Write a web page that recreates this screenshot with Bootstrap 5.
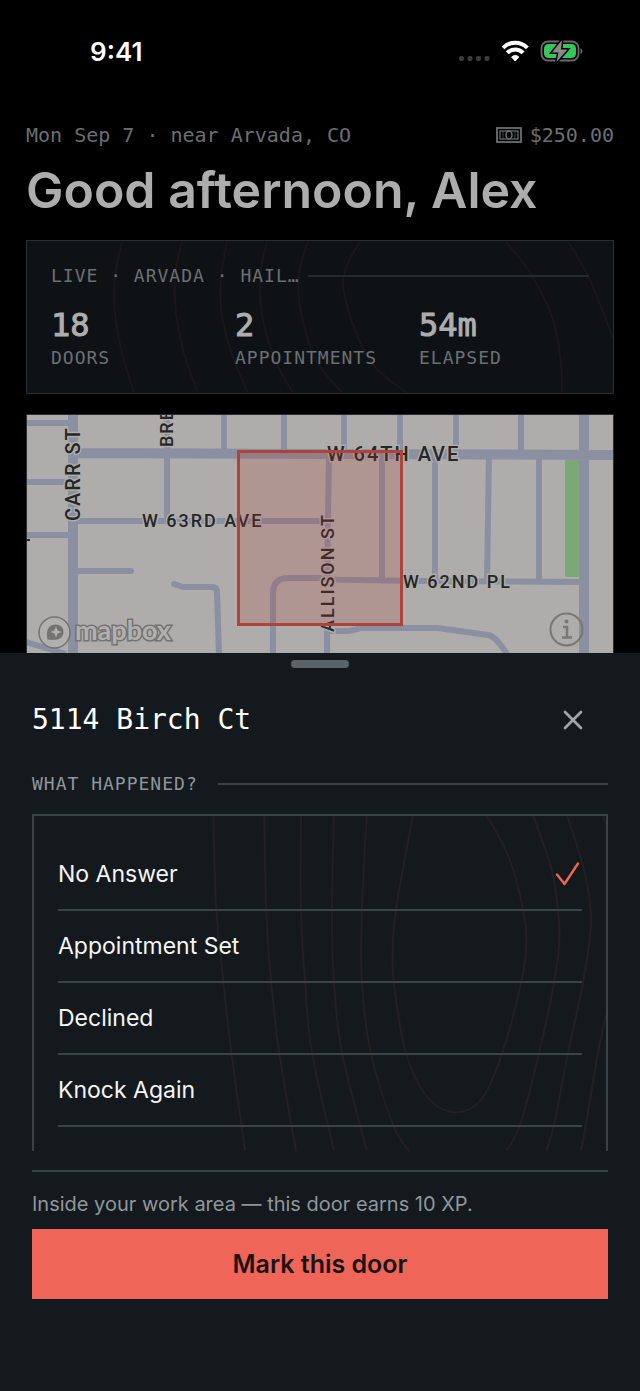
<!DOCTYPE html>
<html lang="en">
<head>
<meta charset="utf-8">
<meta name="viewport" content="width=device-width, initial-scale=1">
<title>Mark a door</title>
<link rel="stylesheet" href="https://cdn.jsdelivr.net/npm/bootstrap@5.3.0/dist/css/bootstrap.min.css">
<style>
  :root { --line: #3a4347; --coral: #ef6658; --sheet: #14191d; }
  body { background: #000; color: #f4f5f5; font-family: Inter, "Liberation Sans", sans-serif; }
  .mono { font-family: "DejaVu Sans Mono", "Liberation Mono", monospace; }
  .status-bar { height: 104px; padding: 0 57px 0 90px; }
  .clock { font-size: 26px; line-height: 32px; font-weight: 600; color: #fff; }
  .page-top { padding: 19px 26px 0; }
  .meta-line { font-size: 20px; line-height: 24px; color: #6b6f71; }
  .greeting { font-size: 50px; line-height: 60px; font-weight: 600; color: #adadad; margin: 13px 0 20px; }
  .live-card { background: #0e1215; border: 1px solid #293034; padding: 24px; margin-bottom: 20px; }
  .eyebrow { font-size: 18px; line-height: 22px; letter-spacing: 1px; }
  .live-card .eyebrow { color: #6b7073; }
  .sheet .eyebrow { color: #8f979c; }
  .rule { height: 2px; background: var(--line); opacity: 1; border: 0; margin: 0; }
  .live-card .rule { background: #242b2f; }
  .figure-grid { display: grid; grid-template-columns: repeat(3, 1fr); column-gap: 14px; margin-top: 20px; }
  .figure-num { font-size: 32px; line-height: 36px; color: #adaeae; margin-bottom: 4px; -webkit-text-stroke: 1px #adaeae; }
  .contours { position: absolute; inset: 0; width: 100%; height: 100%; fill: none; stroke-width: 2px; pointer-events: none; }
  .contours path { vector-effect: non-scaling-stroke; }
  .map-frame { border: 1px solid #293034; border-bottom: 0; background: #aeadab; }
  .map-frame text { font-family: Roboto, "Liberation Sans", sans-serif; font-weight: 500; font-size: 18px; letter-spacing: 2px; fill: #262626; stroke: #aeadab; stroke-width: 3px; paint-order: stroke; }
  .map-frame .major { font-size: 20px; }
  .map-frame .brand { font-family: Lato, sans-serif; font-weight: 700; font-size: 27px; letter-spacing: 0; fill: #b1b0ae; stroke: #747371; }
  .sheet { background: var(--sheet); padding: 7px 32px 92px; }
  .grabber { width: 58px; height: 8px; border-radius: 4px; background: #5b6268; }
  .sheet-head { margin-top: 17px; height: 70px; }
  .address { font-size: 28px; line-height: 36px; font-weight: 400; color: #fff; }
  .close-btn { width: 70px; height: 70px; color: #a0a6aa; }
  .question { margin-top: 18px; gap: 20px; }
  .options { border: 2px solid var(--line); border-bottom: 0; margin-top: 19px; padding: 23px 24px 24px; }
  .option { height: 72px; font-size: 23px; line-height: 28px; border-bottom: 2px solid var(--line); cursor: pointer; }
  .option svg { visibility: hidden; }
  .btn-check:checked + .option svg { visibility: visible; }
  .footer-rule { margin-top: 19px; }
  .hint { font-size: 20px; line-height: 28px; color: #8f979c; margin: 18px 0 11px; }
  .mark-btn { height: 70px; font-size: 25px; line-height: 32px; font-weight: 600; --bs-btn-bg: var(--coral); --bs-btn-color: #191314; --bs-btn-hover-bg: #f27a6d; --bs-btn-hover-color: #191314; }
</style>
</head>
<body class="d-flex flex-column min-vh-100">

<header class="status-bar d-flex align-items-center justify-content-between">
  <span class="clock">9:41</span>
  <svg width="126" height="26" viewBox="0 0 126 26" role="img" aria-label="Wi-Fi on, battery charging">
    <g fill="#3c3c3c"><rect x="2" y="17" width="5" height="5" rx="2"/><rect x="10.500" y="17" width="5" height="5" rx="2"/><rect x="19" y="17" width="5" height="5" rx="2"/><rect x="27.500" y="17" width="5" height="5" rx="2"/></g>
    <g fill="none" stroke="#fff" stroke-width="4">
      <path d="M46 8.800a17 17 0 0 1 24.400 0"/>
      <path d="M50.300 13.800a11 11 0 0 1 15.800 0"/>
    </g>
    <path fill="#fff" d="M58.200 22l-3.600-4a5.600 5.600 0 0 1 7.200 0z" stroke="#fff" stroke-linejoin="round"/>
    <rect x="84.500" y="2.500" width="37" height="19" rx="6.500" fill="none" stroke="#6a6a6a" stroke-width="1.800"/>
    <rect x="87" y="5" width="32" height="14" rx="4.500" fill="#34c759"/>
    <path d="M123.500 9v6q2-1 2-3t-2-3" fill="#6a6a6a"/>
    <path d="M105 1L95 13.500h6.500L99.500 23 110.500 10.500H104z" fill="#8a8a8a" stroke="#000" stroke-width="3" paint-order="stroke"/>
  </svg>
</header>

<main class="page-top">
  <div class="meta-line mono d-flex justify-content-between">
    <span>Mon Sep 7 · near Arvada, CO</span>
    <span class="d-flex align-items-center gap-2">
      <svg width="26" height="16" viewBox="0 0 26 16" fill="none" stroke="#6b6f71" aria-hidden="true">
        <rect x="1" y="1" width="24" height="14" stroke-width="1.800"/><rect x="4" y="4" width="18" height="8" stroke-width="1.200"/><ellipse cx="13" cy="8" rx="3" ry="4" stroke-width="1.500"/><path d="M7 4v8M19 4v8" stroke-width=".6"/>
      </svg>
      $250.00
    </span>
  </div>
  <h1 class="greeting text-nowrap">Good afternoon, Alex</h1>

  <section class="live-card position-relative">
    <svg class="contours" viewBox="0 0 586 152" preserveAspectRatio="none" stroke="#191718" aria-hidden="true">
      <path data-points="95,0 88,36 88,72 95,112 107,152"/>
      <path data-points="155,0 148,34 149,72 157,112 171,152"/>
      <path data-points="200,0 194,36 195,76 206,116 221,152"/>
      <path data-points="240,0 233,36 236,79 248,119 266,152"/>
      <path data-points="281,0 272,33 274,72 289,119 315,152"/>
      <path data-points="333,0 316,39 328,89 348,126 380,152"/>
      <path data-points="478,0 504,33 526,79 534,122 535,152"/>
      <path data-points="541,0 563,39 586,97"/>
    </svg>
    <div class="position-relative mono">
      <div class="eyebrow d-flex align-items-center gap-2"><span class="text-nowrap">LIVE · ARVADA · HAIL…</span><hr class="rule flex-grow-1"></div>
      <div class="figure-grid">
        <div><div class="figure-num">18</div><div class="eyebrow">DOORS</div></div>
        <div><div class="figure-num">2</div><div class="eyebrow">APPOINTMENTS</div></div>
        <div><div class="figure-num">54m</div><div class="eyebrow">ELAPSED</div></div>
      </div>
    </div>
  </section>

  <div class="map-frame">
    <svg class="d-block w-100" viewBox="1 1 586 238" role="img" aria-label="Map of the work area">
      <rect x="539" y="46" width="15" height="117" fill="#7ca777"/>
      <g fill="none" stroke="#8a8fa2" stroke-width="6" stroke-linejoin="round">
        <path d="M0 9H44M0 68H44M0 121H44M0 228L40 240M141 0V107M50 107H302M198 0V39M258 0V39M318 0V40M374 0V41M430 0V41M495 0V41"/>
        <path d="M303 41L301 166M356 41V166M409 41V168M463 41L461 168M513 41V168"/>
        <path d="M247 240V178Q248 164 262 164H294Q300 166 330 166L400 167L558 168"/>
        <path d="M50 157H105M148 170L157 173H186Q191 173 191 178L193 240" stroke-linecap="round"/>
        <path d="M301 240V217H321Q326 217 334 214H412L462 221Q470 222 482 242"/>
        <path d="M47 0V240M47 39L588 41M558 0V240" stroke-width="10"/>
      </g>
      <path d="M0 126h4" stroke="#262626" stroke-width="2"/>
      <text class="major" transform="translate(54 107) rotate(-90)">CARR ST</text>
      <text transform="translate(147 33) rotate(-90)">BRE</text>
      <text x="116" y="113">W 63RD AVE</text>
      <text class="major" x="301" y="47">W 64TH AVE</text>
      <text x="377" y="174">W 62ND PL</text>
      <text transform="translate(308 218) rotate(-90)">ALLISON ST</text>
      <rect x="212.500" y="37.500" width="163" height="173" fill="#b23c34" fill-opacity=".2" stroke="#ae4339" stroke-width="3"/>
      <g>
        <circle cx="28.500" cy="218.500" r="15.500" fill="#b1b0ae" stroke="#747371" stroke-width="1.500"/>
        <path d="M21.500 225.500c-2-9 1-15 8-15 5 0 8 3 8 7.500 0 7-7 9-16 7.500z" fill="#747371"/>
        <path d="M30 212.500l1.600 3.900 3.900 1.600-3.900 1.600-1.600 3.900-1.600-3.900-3.900-1.600 3.900-1.600z" fill="#b1b0ae"/>
        <text class="brand" x="49" y="226">mapbox</text>
      </g>
      <g fill="none" stroke="#787776" stroke-width="2">
        <circle cx="540.500" cy="215.500" r="16"/>
        <path d="M537 213h4v10M536 223.500h10" stroke-width="2.500"/><circle cx="540.500" cy="207.500" r="2" fill="#787776" stroke="none"/>
      </g>
    </svg>
  </div>
</main>

<section class="sheet flex-grow-1" aria-labelledby="address">
  <div class="grabber mx-auto"></div>
  <div class="sheet-head d-flex align-items-center justify-content-between">
    <h2 class="address mono m-0" id="address">5114 Birch Ct</h2>
    <button type="button" class="close-btn btn border-0 p-0 d-flex align-items-center justify-content-center" aria-label="Close">
      <svg width="20" height="20" viewBox="0 0 20 20" fill="none" stroke="currentColor" stroke-width="2.700" stroke-linecap="round"><path d="M2 2l16 16M18 2L2 18"/></svg>
    </button>
  </div>

  <div class="question eyebrow mono d-flex align-items-center"><span id="question">WHAT HAPPENED?</span><hr class="rule flex-grow-1"></div>

  <div class="options position-relative" role="radiogroup" aria-labelledby="question">
    <svg class="contours" viewBox="0 0 574 337" preserveAspectRatio="none" stroke="#231f23" aria-hidden="true">
      <path data-points="180,0 183,95 190,167 198,238 212,337"/>
      <path data-points="231,0 233,95 238,167 246,238 263,337"/>
      <path data-points="268,0 268,95 272,167 279,238 301,337"/>
      <path data-points="301,0 299,95 301,167 309,238 334,337"/>
      <path data-points="334,0 329,95 329,167 338,238 360,310 376,337"/>
      <path data-points="380,0 363,95 360,135 361,167 373,238 394,282 422,298 449,285 470,238 489,167 494,128 491,95 477,43 455,0"/>
      <path data-points="501,0 519,52 526,95 527,128 522,167 507,238 488,310 474,337"/>
      <path data-points="535,0 552,55 559,105 551,167 536,238 522,310 514,337"/>
      <path data-points="571,0 574,9"/>
      <path data-points="574,200 566,238 554,310 549,337"/>
    </svg>
    <div class="position-relative">
      <input class="btn-check" type="radio" name="outcome" id="no-answer" checked>
      <label class="option d-flex align-items-center justify-content-between" for="no-answer">No Answer
        <svg width="28" height="28" viewBox="0 0 28 28" fill="none" stroke="#ef6658" stroke-width="2.400" stroke-linecap="round" stroke-linejoin="round" aria-hidden="true"><path d="M3 14.500l7.500 9.500L24 3.500"/></svg></label>
      <input class="btn-check" type="radio" name="outcome" id="appointment">
      <label class="option d-flex align-items-center justify-content-between" for="appointment">Appointment Set</label>
      <input class="btn-check" type="radio" name="outcome" id="declined">
      <label class="option d-flex align-items-center justify-content-between" for="declined">Declined</label>
      <input class="btn-check" type="radio" name="outcome" id="again">
      <label class="option d-flex align-items-center justify-content-between" for="again">Knock Again</label>
    </div>
  </div>

  <hr class="rule footer-rule">
  <p class="hint">Inside your work area — this door earns 10 XP.</p>
  <button type="button" class="mark-btn btn w-100 rounded-0 border-0 p-0">Mark this door</button>
</section>

<script src="https://cdn.jsdelivr.net/npm/bootstrap@5.3.0/dist/js/bootstrap.bundle.min.js"></script>
<script>
  // Contour lines: run a smooth curve through each list of points.
  document.querySelectorAll('[data-points]').forEach(function (el) {
    var p = el.dataset.points.split(' ').map(function (s) { return s.split(',').map(Number); });
    var d = 'M' + p[0];
    for (var i = 0; i < p.length - 1; i++) {
      var a = p[i - 1] || p[i], b = p[i], c = p[i + 1], e = p[i + 2] || c;
      d += 'C' + [b[0] + (c[0] - a[0]) / 6, b[1] + (c[1] - a[1]) / 6, c[0] - (e[0] - b[0]) / 6, c[1] - (e[1] - b[1]) / 6, c[0], c[1]].join(' ');
    }
    el.setAttribute('d', d);
  });
</script>
</body>
</html>
